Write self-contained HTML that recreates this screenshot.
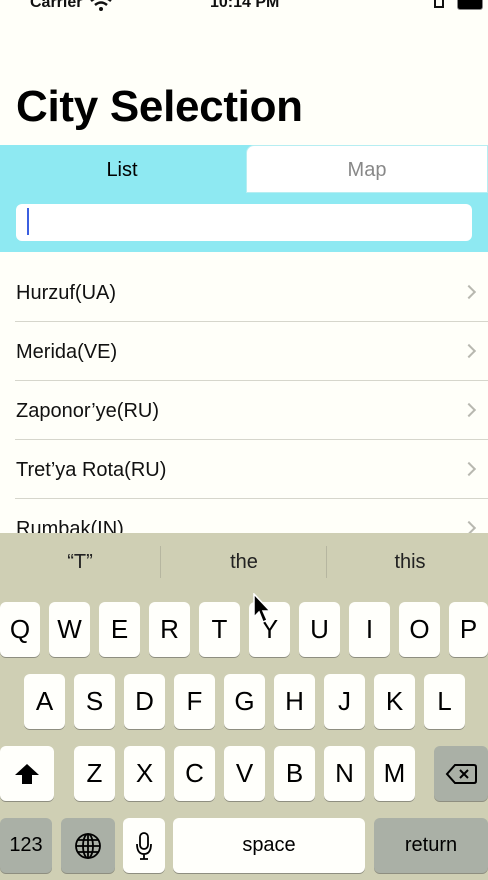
<!DOCTYPE html>
<html><head><meta charset="utf-8"><style>
*{margin:0;padding:0;box-sizing:border-box}
body{width:488px;height:880px;overflow:hidden;background:#fffff9;font-family:"Liberation Sans",sans-serif;position:relative}
.a{position:absolute}
.row{position:absolute;left:16px;font-size:20px;color:#111}
.ln{position:absolute;left:15px;right:0;height:1px;background:#d6d6cc}
.chev{position:absolute;right:14px;width:10px;height:10px;border-right:2px solid #b8b8b0;border-top:2px solid #b8b8b0;transform:rotate(45deg)}
.k{position:absolute;background:#fffffb;border-radius:6px;box-shadow:0 1px 0 #8e8e80;font-size:26px;color:#000;display:flex;align-items:center;justify-content:center}
.d{background:#aab0a6}
.sg{position:absolute;top:551px;font-size:20px;color:#222;text-align:center;width:160px}
</style></head><body>
<div class="a" style="left:30px;top:-6px;font-size:16px;font-weight:bold;color:#111">Carrier</div>
<svg class="a" style="left:90px;top:-2px" width="22" height="14" viewBox="0 0 22 14"><path d="M1 3 Q11 -5 21 3" stroke="#111" stroke-width="2.5" fill="none"/><path d="M5 7 Q11 2 17 7" stroke="#111" stroke-width="2.5" fill="none"/><circle cx="11" cy="11" r="2" fill="#111"/></svg>
<div class="a" style="left:210px;top:-6px;font-size:16px;font-weight:bold;color:#111">10:14 PM</div>
<div class="a" style="left:434px;top:0;width:10px;height:8px;border:2px solid #111;border-top:none"></div>
<div class="a" style="left:457px;top:-3px;width:26px;height:13px;background:#000;border:1px solid #888;border-radius:3px"></div>
<div class="a" style="left:16px;top:82px;font-size:44px;font-weight:bold;color:#000;letter-spacing:-0.3px">City Selection</div>
<div class="a" style="left:0;top:145px;width:488px;height:107px;background:#8ee9f2"></div>
<div class="a" style="left:0;top:145px;width:244px;height:48px;background:#8ee9f2;border-radius:0 8px 0 0"></div>
<div class="a" style="left:246px;top:145px;width:242px;height:48px;background:#fff;border-radius:8px 0 0 0;border:1px solid #b6eef2"></div>
<div class="a" style="left:0;top:159px;width:244px;text-align:center;font-size:20px;color:#000">List</div>
<div class="a" style="left:246px;top:159px;width:242px;text-align:center;font-size:20px;color:#888">Map</div>
<div class="a" style="left:16px;top:204px;width:456px;height:37px;background:#fff;border-radius:6px"></div>
<div class="a" style="left:27px;top:208px;width:2px;height:27px;background:#3b5fe0"></div>
<div class="row" style="top:282px">Hurzuf(UA)</div><div class="chev" style="top:287px"></div><div class="ln" style="top:321px"></div>
<div class="row" style="top:341px">Merida(VE)</div><div class="chev" style="top:346px"></div><div class="ln" style="top:380px"></div>
<div class="row" style="top:400px">Zaponor’ye(RU)</div><div class="chev" style="top:405px"></div><div class="ln" style="top:439px"></div>
<div class="row" style="top:459px">Tret’ya Rota(RU)</div><div class="chev" style="top:464px"></div><div class="ln" style="top:498px"></div>
<div class="row" style="top:518px">Rumbak(IN)</div><div class="chev" style="top:523px"></div>
<div class="a" style="left:0;top:533px;width:488px;height:347px;background:#cfcfb4"></div>
<div class="sg" style="left:0">“T”</div><div class="sg" style="left:164px">the</div><div class="sg" style="left:330px">this</div>
<div class="a" style="left:160px;top:546px;width:1px;height:32px;background:#b6b6a0"></div>
<div class="a" style="left:326px;top:546px;width:1px;height:32px;background:#b6b6a0"></div>
<div class="k" style="left:0;top:602px;width:40px;height:55px">Q</div>
<div class="k" style="left:49px;top:602px;width:41px;height:55px">W</div>
<div class="k" style="left:99px;top:602px;width:41px;height:55px">E</div>
<div class="k" style="left:149px;top:602px;width:41px;height:55px">R</div>
<div class="k" style="left:199px;top:602px;width:41px;height:55px">T</div>
<div class="k" style="left:249px;top:602px;width:41px;height:55px">Y</div>
<div class="k" style="left:299px;top:602px;width:41px;height:55px">U</div>
<div class="k" style="left:349px;top:602px;width:41px;height:55px">I</div>
<div class="k" style="left:399px;top:602px;width:41px;height:55px">O</div>
<div class="k" style="left:449px;top:602px;width:39px;height:55px">P</div>
<div class="k" style="left:24px;top:674px;width:41px;height:55px">A</div>
<div class="k" style="left:74px;top:674px;width:41px;height:55px">S</div>
<div class="k" style="left:124px;top:674px;width:41px;height:55px">D</div>
<div class="k" style="left:174px;top:674px;width:41px;height:55px">F</div>
<div class="k" style="left:224px;top:674px;width:41px;height:55px">G</div>
<div class="k" style="left:274px;top:674px;width:41px;height:55px">H</div>
<div class="k" style="left:324px;top:674px;width:41px;height:55px">J</div>
<div class="k" style="left:374px;top:674px;width:41px;height:55px">K</div>
<div class="k" style="left:424px;top:674px;width:41px;height:55px">L</div>
<div class="k" style="left:0;top:746px;width:54px;height:55px"><svg width="26" height="22" viewBox="0 0 26 22"><path d="M13 1 L25 12 H18 V21 H8 V12 H1 Z" fill="#000"/></svg></div>
<div class="k" style="left:74px;top:746px;width:41px;height:55px">Z</div>
<div class="k" style="left:124px;top:746px;width:41px;height:55px">X</div>
<div class="k" style="left:174px;top:746px;width:41px;height:55px">C</div>
<div class="k" style="left:224px;top:746px;width:41px;height:55px">V</div>
<div class="k" style="left:274px;top:746px;width:41px;height:55px">B</div>
<div class="k" style="left:324px;top:746px;width:41px;height:55px">N</div>
<div class="k" style="left:374px;top:746px;width:41px;height:55px">M</div>
<div class="k d" style="left:434px;top:746px;width:54px;height:55px"><svg width="32" height="22" viewBox="0 0 32 22"><path d="M10 2 H29 Q31 2 31 4 V18 Q31 20 29 20 H10 L2 11 Z" fill="none" stroke="#000" stroke-width="2"/><path d="M15 7 L23 15 M23 7 L15 15" stroke="#000" stroke-width="2"/></svg></div>
<div class="k d" style="left:0;top:818px;width:52px;height:55px;font-size:20px">123</div>
<div class="k d" style="left:61px;top:818px;width:54px;height:55px"><svg width="28" height="28" viewBox="0 0 28 28" fill="none" stroke="#000" stroke-width="1.8"><circle cx="14" cy="14" r="12"/><ellipse cx="14" cy="14" rx="5" ry="12"/><path d="M2 14H26M4 8H24M4 20H24M14 2V26"/></svg></div>
<div class="k" style="left:123px;top:818px;width:42px;height:55px"><svg width="16" height="28" viewBox="0 0 16 28" fill="none" stroke="#000" stroke-width="1.8"><rect x="4" y="1" width="8" height="16" rx="4"/><path d="M1 12 Q1 22 8 22 Q15 22 15 12 M8 22 V27 M4 27 H12"/></svg></div>
<div class="k" style="left:173px;top:818px;width:192px;height:55px;font-size:20px">space</div>
<div class="k d" style="left:374px;top:818px;width:114px;height:55px;font-size:20px">return</div>
<svg class="a" style="left:252px;top:593px" width="24" height="34" viewBox="0 0 24 34"><path d="M2 1 V24 L7 19 L11 29 L15 27 L11 18 H18 Z" fill="#000" stroke="#fff" stroke-width="1.5"/></svg>
</body></html>
